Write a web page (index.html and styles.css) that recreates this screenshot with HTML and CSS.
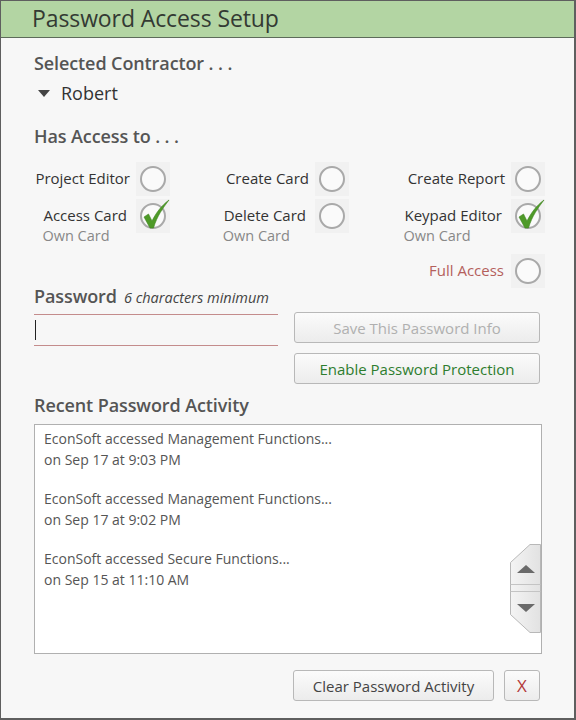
FILE: index.html
```html
<!DOCTYPE html>
<html>
<head>
<meta charset="utf-8">
<link rel="stylesheet" href="styles.css">
</head>
<body>
<div class="frame">
  <header class="titlebar">Password Access Setup</header>
  <main class="content">
    <h2 class="heading">Selected Contractor . . .</h2>
    <div class="contractor"><span class="tri"></span>Robert</div>

    <h2 class="heading access-head">Has Access to . . .</h2>
    <div class="perm-grid">
      <div class="perm c1"><div class="lbl">Project Editor</div><span class="chk"></span></div>
      <div class="perm c2"><div class="lbl">Create Card</div><span class="chk"></span></div>
      <div class="perm c3"><div class="lbl">Create Report</div><span class="chk"></span></div>

      <div class="perm c1 sub"><div class="lbl">Access Card<small>Own Card</small></div><span class="chk on"><svg viewBox="0 0 34 34" class="tick"><path d="M8 18 L12.5 15 L16 22 C20 14 25 7 33 1 C27 9 21 17 17.5 29 L14 29 Z"/></svg></span></div>
      <div class="perm c2 sub"><div class="lbl">Delete Card<small>Own Card</small></div><span class="chk"></span></div>
      <div class="perm c3 sub"><div class="lbl">Keypad Editor<small>Own Card</small></div><span class="chk on"><svg viewBox="0 0 34 34" class="tick"><path d="M8 18 L12.5 15 L16 22 C20 14 25 7 33 1 C27 9 21 17 17.5 29 L14 29 Z"/></svg></span></div>

      <div class="perm c3 full"><div class="lbl">Full Access</div><span class="chk"></span></div>
    </div>

    <div class="pw-head"><span class="heading">Password</span><em>6 characters minimum</em></div>
    <div class="pw-row">
      <div class="pw-input"><span class="caret"></span></div>
      <div class="pw-buttons">
        <button class="btn disabled">Save This Password Info</button>
        <button class="btn green">Enable Password Protection</button>
      </div>
    </div>

    <h2 class="heading recent-head">Recent Password Activity</h2>
    <div class="list">
      <div class="item">EconSoft accessed Management Functions...<br>on Sep 17 at 9:03 PM</div>
      <div class="item">EconSoft accessed Management Functions...<br>on Sep 17 at 9:02 PM</div>
      <div class="item">EconSoft accessed Secure Functions...<br>on Sep 15 at 11:10 AM</div>
      <svg class="scroller" viewBox="0 0 31 89" width="31" height="89">
        <defs>
          <linearGradient id="sg" x1="0" x2="1" y1="0" y2="0">
            <stop offset="0" stop-color="#f4f4f4"/>
            <stop offset="1" stop-color="#e2e2e2"/>
          </linearGradient>
        </defs>
        <path d="M0.5 18.5 L20 0.5 L30.5 0.5 L30.5 88.5 L20 88.5 L0.5 70.5 Z" fill="url(#sg)" stroke="#b8b8b8"/>
        <line x1="0.5" y1="40.5" x2="30.5" y2="40.5" stroke="#c4c4c4"/>
        <line x1="0.5" y1="47.5" x2="30.5" y2="47.5" stroke="#c4c4c4"/>
        <path d="M7 29 L16 21 L25 29 Z" fill="#6a6a6a"/>
        <path d="M7 60 L25 60 L16 68 Z" fill="#6a6a6a"/>
      </svg>
    </div>

    <div class="footer">
      <button class="btn clear">Clear Password Activity</button>
      <button class="btn close">X</button>
    </div>
  </main>
</div>
</body>
</html>
```
FILE: styles.css
```css
* { box-sizing: border-box; }
html, body { margin: 0; padding: 0; }
body {
  width: 576px;
  height: 720px;
  font-family: "Open Sans", "Noto Sans", sans-serif;
  color: #444;
  background: #f7f7f7;
}
.frame {
  width: 576px;
  height: 720px;
  border: 1px solid #5f5f5f;
  border-right-width: 2px;
  border-bottom-width: 2px;
  background: #f7f7f7;
  display: flex;
  flex-direction: column;
}
.titlebar {
  height: 37px;
  background: #b3d5a3;
  border-bottom: 1px solid #5d6b5a;
  color: #333a33;
  font-size: 23px;
  line-height: 35px;
  padding-left: 31px;
  letter-spacing: -0.1px;
}
.content {
  padding: 0 34px 0 33px;
  display: flex;
  flex-direction: column;
}
.heading {
  margin: 0;
  font-size: 18px;
  font-weight: 600;
  color: #555;
  letter-spacing: -0.1px;
}
.content > .heading:first-child { margin-top: 12px; line-height: 26px; }
.contractor {
  display: flex;
  align-items: center;
  font-size: 18px;
  color: #333;
  line-height: 26px;
  margin-top: 4px;
}
.tri {
  width: 0; height: 0;
  border-left: 6.5px solid transparent;
  border-right: 6.5px solid transparent;
  border-top: 7px solid #444;
  margin: 0 11px 0 4px;
}
.access-head { margin-top: 17px; line-height: 26px; }

.perm-grid {
  display: grid;
  grid-template-columns: 136px 179px 196px;
  grid-template-rows: 37px 55px 34px;
  margin-top: 13px;
  font-size: 15px;
  color: #333;
}
.perm {
  display: flex;
  justify-content: flex-end;
  align-items: flex-start;
}
.perm .lbl {
  padding-top: 6px;
  margin-right: 6px;
  display: flex;
  flex-direction: column;
  line-height: 20px;
}
.perm.sub .lbl { margin-right: 9px; }
.perm small {
  font-size: 14.5px;
  color: #888;
  margin-left: -1px;
  margin-top: 1px;
}
.c1 { grid-column: 1; }
.c2 { grid-column: 2; }
.c3 { grid-column: 3; }
.full { grid-row: 3; }
.full .lbl { color: #b4605c; margin-right: 7px; }
.chk {
  position: relative;
  width: 34px;
  height: 34px;
  background: #f1f1f1;
  flex: none;
}
.chk::before {
  content: "";
  position: absolute;
  left: 4px; top: 4px;
  width: 26px; height: 26px;
  border-radius: 50%;
  border: 2px solid #a9a9a9;
  background: #fafafa;
  box-sizing: border-box;
}
.tick {
  position: absolute;
  left: 0; top: 0;
  width: 34px; height: 34px;
  overflow: visible;
}
.tick path { fill: #4e9a28; stroke: #3f8520; stroke-width: 0.6; }

.pw-head {
  display: flex;
  align-items: baseline;
  gap: 7px;
  margin-top: -4px;
  height: 24px;
  line-height: 24px;
}
.pw-head em {
  font-size: 14.5px;
  color: #444;
  font-style: italic;
}
.pw-row {
  display: flex;
  gap: 16px;
  margin-top: 4px;
}
.pw-input {
  width: 245px;
  height: 32px;
  border-top: 1px solid #c48c8c;
  border-bottom: 1px solid #c48c8c;
  margin-top: 2px;
  display: flex;
  align-items: center;
  padding-left: 1px;
}
.caret { width: 1px; height: 20px; background: #222; }
.pw-buttons {
  display: flex;
  flex-direction: column;
  gap: 10px;
  width: 247px;
}
.btn {
  font-family: inherit;
  height: 31px;
  border: 1px solid #b8b8b8;
  border-radius: 3px;
  background: linear-gradient(#fbfbfb, #ececec);
  font-size: 15px;
  color: #444;
  padding: 0;
  line-height: 28px;
}
.btn.disabled { color: #b0b0b0; }
.btn.green { color: #2e7d2e; }

.recent-head { margin-top: 9px; height: 24px; line-height: 24px; }
.list {
  position: relative;
  margin-top: 7px;
  width: 508px;
  height: 230px;
  background: #fff;
  border: 1px solid #b0b0b0;
  padding: 4px 0 0 9px;
  font-size: 14px;
  color: #555;
  line-height: 20.5px;
}
.item { margin-bottom: 19px; }
.scroller {
  position: absolute;
  right: 0;
  top: 119px;
}
.footer {
  display: flex;
  justify-content: flex-end;
  gap: 10px;
  margin-top: 16px;
  padding-right: 0;
}
.btn.clear { width: 201px; font-size: 15px; color: #444; }
.btn.close { width: 36px; color: #b33a3a; font-size: 17px; }
```
